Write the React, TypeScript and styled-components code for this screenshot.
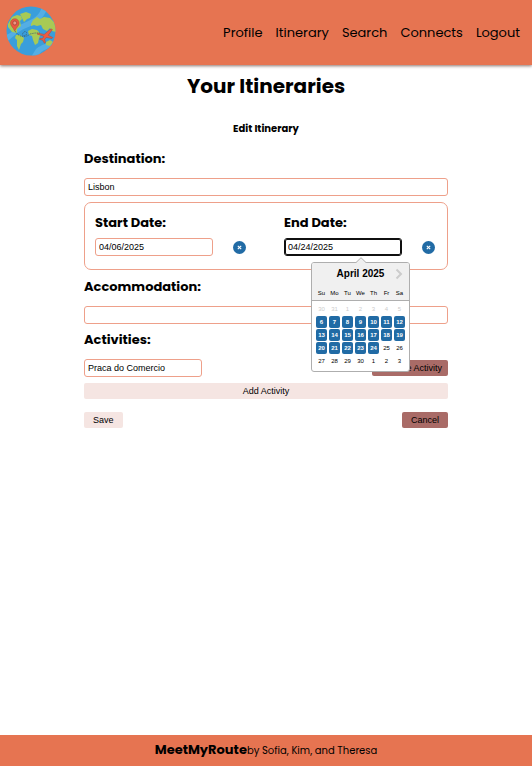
import React, { useState } from "react";
import styled, { createGlobalStyle } from "styled-components";

const GlobalStyle = createGlobalStyle`
  *, *::before, *::after { box-sizing: border-box; }
  body {
    margin: 0;
    background: #fff;
    color: #000;
    font-family: Poppins, Inter, sans-serif;
  }
`;

const CONTROL_FONT = `"Liberation Sans", Arial, sans-serif`;

const Page = styled.div`
  display: flex;
  flex-direction: column;
  min-height: 100vh;
`;

const Header = styled.header`
  display: flex;
  align-items: center;
  justify-content: space-between;
  height: 65px;
  padding: 0 12px 0 6px;
  background: #e67451;
  box-shadow: 0 1px 3px rgba(60, 20, 10, 0.6);
`;

const LogoLink = styled.a`
  display: block;
  height: 50px;
  margin-bottom: 4px;
`;

const Nav = styled.nav`
  display: flex;
  gap: 13px;
`;

const NavLink = styled.a`
  color: #000;
  font-size: 13px;
  line-height: 20px;
  text-decoration: none;
`;

const Main = styled.main`
  flex: 1;
  padding: 0 84px;
`;

const Title = styled.h1`
  margin: 6px 0 0;
  font-size: 20px;
  line-height: 30px;
  text-align: center;
`;

const Subtitle = styled.h2`
  margin: 20px 0 0;
  font-size: 10px;
  line-height: 16px;
  text-align: center;
`;

const Form = styled.form`
  display: flex;
  flex-direction: column;
  margin-top: 12px;
`;

const FieldLabel = styled.label`
  font-size: 13px;
  font-weight: 700;
  line-height: 20px;
`;

const TextInput = styled.input<{ $short?: boolean }>`
  width: ${(p) => (p.$short ? "118px" : "100%")};
  height: 18px;
  padding: 0 3px;
  border: 1px solid #eea08a;
  border-radius: 3px;
  background: #fff;
  color: #000;
  font-family: ${CONTROL_FONT};
  font-size: 9px;
  &:focus {
    outline: 1px solid #101010;
    outline-offset: -2px;
    border-color: #101010;
  }
`;

const Field = styled.div`
  display: flex;
  flex-direction: column;
  gap: 9px;
`;

const Dates = styled.div`
  display: grid;
  grid-template-columns: 1fr 1fr;
  column-gap: 36px;
  height: 68px;
  margin: 6px 0 7px;
  padding: 10px;
  border: 1px solid #eea08a;
  border-radius: 7px;
`;

const DateField = styled.div`
  display: flex;
  flex-direction: column;
  gap: 5px;
`;

const DateRow = styled.div`
  position: relative;
  display: flex;
  align-items: center;
  justify-content: space-between;
  width: 151px;
`;

const ClearButton = styled.button`
  display: flex;
  align-items: center;
  justify-content: center;
  width: 13px;
  height: 13px;
  padding: 0;
  border: 0;
  border-radius: 50%;
  background: #216ba5;
`;

const Popper = styled.div`
  position: absolute;
  z-index: 1;
  top: 24px;
  left: 27px;
  width: 99px;
  border: 1px solid #aeaeae;
  border-radius: 3px;
  background: #fff;
  color: #000;
  font-family: ${CONTROL_FONT};
`;

const Pointer = styled.svg`
  position: absolute;
  top: -6px;
  left: 42px;
`;

const MonthHead = styled.div`
  position: relative;
  height: 23px;
  border-radius: 2px 2px 0 0;
  background: #f0f0f0;
  font-size: 10px;
  font-weight: 700;
  line-height: 22px;
  text-align: center;
`;

const NextButton = styled.button`
  position: absolute;
  top: 5px;
  right: 6px;
  display: flex;
  padding: 0;
  border: 0;
  background: none;
`;

const MonthTable = styled.table`
  width: 100%;
  border-collapse: separate;
  border-spacing: 0;
  table-layout: fixed;
  font-size: 6px;
  line-height: 12px;
  text-align: center;
  margin-bottom: 4px;
`;

const DayName = styled.th`
  height: 15px;
  padding: 0;
  border-bottom: 1px solid #aeaeae;
  background: #f0f0f0;
  font-weight: 400;
  &:first-child { width: 16px; padding-left: 3px; }
  &:last-child { width: 16px; padding-right: 3px; }
`;

const DayCell = styled.td`
  height: 13px;
  padding: 1px 1px 0;
  &:first-child { padding-left: 4px; }
  &:last-child { padding-right: 4px; }
  tr:first-child > & { padding-top: 2px; }
`;

const Day = styled.button<{ $state: string }>`
  display: block;
  width: 100%;
  height: 12px;
  padding: 0;
  border: 0;
  border-radius: 2px;
  background: ${(p) => (p.$state === "range" ? "#216ba5" : "transparent")};
  color: ${(p) => (p.$state === "range" ? "#fff" : p.$state === "off" ? "#ccc" : "#000")};
  font-family: inherit;
  font-size: 6px;
  font-weight: ${(p) => (p.$state === "range" ? 700 : 400)};
  line-height: 12px;
  text-align: center;
`;

const ActionRow = styled.div<{ $top: number }>`
  display: flex;
  align-items: center;
  justify-content: space-between;
  margin-top: ${(p) => p.$top}px;
`;

const Button = styled.button<{ $tone?: "danger"; $top?: number }>`
  height: 16px;
  margin-top: ${(p) => p.$top ?? 0}px;
  padding: 0 ${(p) => (p.$tone ? 6 : 9)}px;
  border: 0;
  border-radius: 2px;
  background: ${(p) => (p.$tone ? "#a96b67" : "#f5e5e2")};
  color: #000;
  font-family: ${CONTROL_FONT};
  font-size: 9px;
  line-height: 16px;
`;

const CancelButton = styled(Button)`
  padding: 0 9px;
`;

const Footer = styled.footer`
  display: flex;
  align-items: baseline;
  justify-content: center;
  height: 31px;
  padding-top: 5px;
  background: #e67451;
  font-size: 10px;
  line-height: 20px;
`;

const Brand = styled.strong`
  font-size: 13px;
`;

function GlobeLogo() {
  return (
    <svg width="50" height="50" viewBox="0 0 50 50" aria-label="MeetMyRoute" role="img">
      <defs>
        <clipPath id="globe"><circle cx="25" cy="25" r="24.5" /></clipPath>
      </defs>
      <circle cx="25" cy="25" r="24.5" fill="#3a9edb" />
      <g clipPath="url(#globe)">
        <path d="M36 0C34 10 27 13 18 17S7 27 0 29v7c8-5 10-10 20-14S38 12 41 3z" fill="#54aee4" />
        <path d="M50 35c-8 2-14 3-20 8l-5 8h6c5-7 11-9 19-11z" fill="#54aee4" />
        <path d="M2 18 6 11l5-2 4 1 1 3-2 2 1 5-4 3 0 4-5-1-4-5z" fill="#a8ca55" />
        <path d="m14 8 6-2 5 2-1 4-3 1-3 3-2-4z" fill="#a8ca55" />
        <path d="m10 29 4 0 4 3-1 4-2 2-2 6-2-4 0-6-2-2z" fill="#a8ca55" />
        <path d="m25 18 2-4 4-3 3 2 4-2 6 1 6 6v8l-4-1-2-3-3 3-4-2-2-4-4 1-3-1-3 1z" fill="#a8ca55" />
        <path d="m22 25 4-2 5 1 4 4-2 4-1 5-3 2-2-5-1-4-3-1z" fill="#a8ca55" />
        <path d="m40 36 4-2 3 2-3 4-4-1z" fill="#a8ca55" />
      </g>
      <path d="M9 25c3 5 8 7 11 4 2-3-1-5-3-2s3 5 7 1l5-1h5" fill="none" stroke="#365a70" strokeWidth=".7" strokeDasharray="1.4 .8" />
      <path d="M8.7 25C7 21 4.5 20 4.5 17a4.3 4.3 0 0 1 8.6 0c0 3-2.7 4-4.4 8z" fill="#e85840" stroke="#a74b39" strokeWidth=".5" />
      <circle cx="8.8" cy="17" r="2" fill="#ee9880" stroke="#963f35" strokeWidth=".7" />
      <path d="m31 28 1.2-.8 6 1.2L44 23.5q2.2-1.2 2.3.2l-4 5.6 4.5 2.2-.8 1-5.8-1-1.5 1.7.7 3.4-1 .6-1.8-3-3-.8.3-1 2.8-.1 1.1-2z" fill="#ee5a3f" stroke="#a64837" strokeWidth=".5" />
    </svg>
  );
}

function ClearIcon() {
  return (
    <svg width="5" height="5" viewBox="0 0 5 5" aria-hidden="true">
      <path d="m.8.8 3.4 3.4M4.2.8.8 4.2" stroke="#fff" strokeWidth="1.1" />
    </svg>
  );
}

const WEEKDAYS = ["Su", "Mo", "Tu", "We", "Th", "Fr", "Sa"];
const WEEKS = [
  [30, 31, 1, 2, 3, 4, 5],
  [6, 7, 8, 9, 10, 11, 12],
  [13, 14, 15, 16, 17, 18, 19],
  [20, 21, 22, 23, 24, 25, 26],
  [27, 28, 29, 30, 1, 2, 3],
];

function dayState(week: number, day: number) {
  if (week === 0) return "off";
  if (week < 4 && day <= 24) return "range";
  return "open";
}

function Calendar() {
  return (
    <Popper>
      <Pointer width="14" height="7" viewBox="0 0 14 7" aria-hidden="true">
        <path d="M1 6.5 7 .7l6 5.8V7H1z" fill="#f0f0f0" />
        <path d="M1 6.5 7 .7l6 5.8" fill="none" stroke="#aeaeae" />
      </Pointer>
      <MonthHead>
        April 2025
        <NextButton type="button" aria-label="Next month">
          <svg width="8" height="12" viewBox="0 0 8 12" aria-hidden="true">
            <path d="m1.5 1.5 4.5 4.5-4.5 4.5" fill="none" stroke="#ccc" strokeWidth="2" />
          </svg>
        </NextButton>
      </MonthHead>
      <MonthTable>
        <thead>
          <tr>{WEEKDAYS.map((name) => <DayName key={name} scope="col">{name}</DayName>)}</tr>
        </thead>
        <tbody>
          {WEEKS.map((week, w) => (
            <tr key={w}>
              {week.map((day) => (
                <DayCell key={day}>
                  <Day type="button" $state={dayState(w, day)}>{day}</Day>
                </DayCell>
              ))}
            </tr>
          ))}
        </tbody>
      </MonthTable>
    </Popper>
  );
}

export default function App() {
  const [destination, setDestination] = useState("Lisbon");
  const [start, setStart] = useState("04/06/2025");
  const [end, setEnd] = useState("04/24/2025");
  const [stay, setStay] = useState("");
  const [activity, setActivity] = useState("Praca do Comercio");

  return (
    <Page>
      <GlobalStyle />
      <Header>
        <LogoLink href="#"><GlobeLogo /></LogoLink>
        <Nav>
          {["Profile", "Itinerary", "Search", "Connects", "Logout"].map((item) => (
            <NavLink key={item} href={`#${item.toLowerCase()}`}>{item}</NavLink>
          ))}
        </Nav>
      </Header>
      <Main>
        <Title>Your Itineraries</Title>
        <Subtitle>Edit Itinerary</Subtitle>
        <Form onSubmit={(e) => e.preventDefault()}>
          <Field>
            <FieldLabel htmlFor="destination">Destination:</FieldLabel>
            <TextInput id="destination" value={destination} onChange={(e) => setDestination(e.target.value)} />
          </Field>
          <Dates>
            <DateField>
              <FieldLabel htmlFor="start">Start Date:</FieldLabel>
              <DateRow>
                <TextInput $short id="start" value={start} onChange={(e) => setStart(e.target.value)} />
                <ClearButton type="button" aria-label="Clear start date" onClick={() => setStart("")}><ClearIcon /></ClearButton>
              </DateRow>
            </DateField>
            <DateField>
              <FieldLabel htmlFor="end">End Date:</FieldLabel>
              <DateRow>
                <TextInput $short id="end" autoFocus value={end} onChange={(e) => setEnd(e.target.value)} />
                <ClearButton type="button" aria-label="Clear end date" onClick={() => setEnd("")}><ClearIcon /></ClearButton>
                <Calendar />
              </DateRow>
            </DateField>
          </Dates>
          <Field>
            <FieldLabel htmlFor="stay">Accommodation:</FieldLabel>
            <TextInput id="stay" value={stay} onChange={(e) => setStay(e.target.value)} />
          </Field>
          <ActionRow $top={6}>
            <FieldLabel htmlFor="activity">Activities:</FieldLabel>
          </ActionRow>
          <ActionRow $top={9}>
            <TextInput $short id="activity" value={activity} onChange={(e) => setActivity(e.target.value)} />
            <Button type="button" $tone="danger">Remove Activity</Button>
          </ActionRow>
          <Button type="button" $top={6}>Add Activity</Button>
          <ActionRow $top={13}>
            <Button type="submit">Save</Button>
            <CancelButton type="button" $tone="danger">Cancel</CancelButton>
          </ActionRow>
        </Form>
      </Main>
      <Footer><Brand>MeetMyRoute</Brand>by Sofia, Kim, and Theresa</Footer>
    </Page>
  );
}
